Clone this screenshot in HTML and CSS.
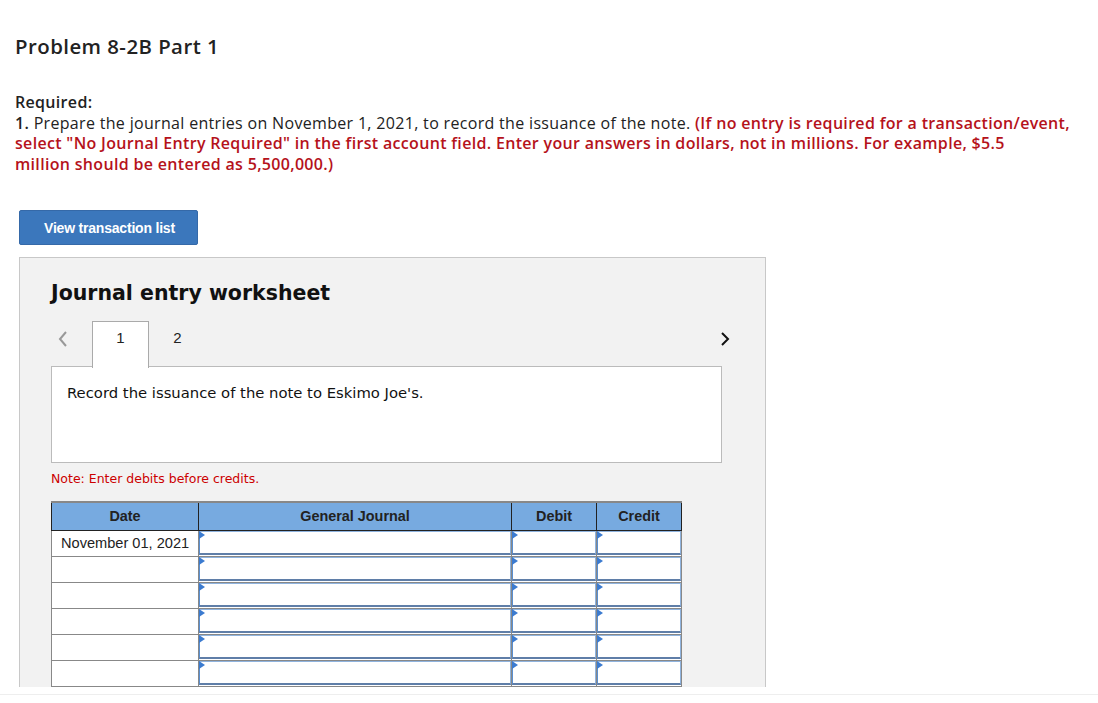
FILE: index.html
```html
<!doctype html>
<html>
<head>
<meta charset="UTF-8">
<title>Problem 8-2B Part 1</title>
<link rel="stylesheet" href="styles.css">
</head>
<body>
<div class="page">
	<h1 class="title">Problem 8-2B Part 1</h1>
	<div class="req">
		<p class="req-head">Required:</p>
		<p><b>1.</b> Prepare the journal entries on November 1, 2021, to record the issuance of the note. <span class="hint">(If no entry is required for a transaction/event, select "No Journal Entry Required" in the first account field. Enter your answers in dollars, not in millions. For example, $5.5<br>million should be entered as 5,500,000.)</span></p>
	</div>
	<button class="btn-list">View transaction list</button>
	<div class="sheet">
		<h2 class="sheet-title">Journal entry worksheet</h2>
		<div class="tabs">
			<span class="arrow prev">
				<svg width="10" height="16" viewBox="0 0 10 16"><path d="M8 1 L2 8 L8 15" fill="none" stroke="#999" stroke-width="2"/></svg>
			</span>
			<span class="tab on">1</span>
			<span class="tab">2</span>
			<span class="arrow next">
				<svg width="10" height="16" viewBox="0 0 10 16"><path d="M2 2 L8 8 L2 14" fill="none" stroke="#111" stroke-width="2"/></svg>
			</span>
		</div>
		<div class="record">Record the issuance of the note to Eskimo Joe's.</div>
		<p class="note">Note: Enter debits before credits.</p>
		<table class="journal">
			<tr>
				<th class="c-date">Date</th>
				<th class="c-acct">General Journal</th>
				<th class="c-amt">Debit</th>
				<th class="c-amt">Credit</th>
			</tr>
			<tr>
				<td class="date">November 01, 2021</td>
				<td><div class="inp"></div></td>
				<td><div class="inp"></div></td>
				<td><div class="inp"></div></td>
			</tr>
			<tr>
				<td class="date"></td>
				<td><div class="inp"></div></td>
				<td><div class="inp"></div></td>
				<td><div class="inp"></div></td>
			</tr>
			<tr>
				<td class="date"></td>
				<td><div class="inp"></div></td>
				<td><div class="inp"></div></td>
				<td><div class="inp"></div></td>
			</tr>
			<tr>
				<td class="date"></td>
				<td><div class="inp"></div></td>
				<td><div class="inp"></div></td>
				<td><div class="inp"></div></td>
			</tr>
			<tr>
				<td class="date"></td>
				<td><div class="inp"></div></td>
				<td><div class="inp"></div></td>
				<td><div class="inp"></div></td>
			</tr>
			<tr>
				<td class="date"></td>
				<td><div class="inp"></div></td>
				<td><div class="inp"></div></td>
				<td><div class="inp"></div></td>
			</tr>
		</table>
	</div>
</div>
<div class="foot"></div>
</body>
</html>
```

FILE: styles.css
```css
*{margin:0;padding:0;box-sizing:border-box;}
body{background:#fff;font-family:"Open Sans",Lato,sans-serif;color:#222;}
.page{height:687px;overflow:hidden;padding:0 0 0 15px;}
.title{font-size:20.4px;font-weight:600;color:#222;padding-top:33px;line-height:26px;letter-spacing:0.45px;}
.req{margin-top:33px;font-size:16px;line-height:20.5px;width:1075px;letter-spacing:0.32px;}
.req-head{font-weight:600;}
.req b{font-weight:600;}
.hint{color:#b5121b;font-weight:600;letter-spacing:0.32px;}
.btn-list{display:block;margin:36px 0 0 4px;width:179px;height:35px;background:#3b77bc;color:#fff;border:1px solid #3569a8;border-radius:2px;font-family:"Liberation Sans",Arial,sans-serif;font-size:14px;font-weight:bold;text-align:left;padding-left:24px;letter-spacing:-0.2px;}
.sheet{margin:12px 0 0 4px;width:747px;height:460px;background:#f2f2f2;border:1px solid #c8c8c8;padding:0 0 0 31px;font-family:"DejaVu Sans",Verdana,sans-serif;}
.sheet-title{font-size:20.5px;font-weight:bold;color:#111;margin-top:25px;line-height:20px;}
.tabs{display:flex;align-items:flex-start;margin-top:18px;height:46px;width:672px;position:relative;}
.arrow{display:flex;align-items:center;height:20px;margin-top:8px;}
.prev{margin:8px 24px 0 7px;}
.next{margin-left:auto;margin-right:-7px;}
.tab{font-family:"Liberation Sans",Arial,sans-serif;font-size:15px;width:57px;height:46px;padding-top:8px;text-align:center;color:#222;}
.tab.on{background:#fff;border:1px solid #aaa;border-bottom:none;margin-bottom:-1px;position:relative;z-index:2;height:47px;padding-top:7px;}
.record{width:671px;height:97px;background:#fff;border:1px solid #bbb;margin-top:-1px;padding:17px 0 0 15px;font-size:14.8px;color:#111;}
.note{color:#c00;font-size:12.5px;margin-top:9px;line-height:14px;}
.journal{border-collapse:collapse;margin-top:15px;border-top:2px solid #888;font-family:"Liberation Sans",Arial,sans-serif;}
.journal th{background:#77aae0;height:28px;font-size:14.4px;font-weight:bold;color:#222;border:1px solid #222;border-top:none;}
.c-date{width:147px;}
.c-acct{width:313px;}
.c-amt{width:85px;}
.journal td{border:1px solid #888;height:26px;padding:0;background:#fff;}
.journal td.date{font-size:14.6px;color:#222;padding:0 0 0 9px;}
.inp{position:relative;height:24px;margin:0;border:1px solid #8fb3de;border-left:1px solid #5a8fd0;border-bottom:2px solid #5f7ea8;background:#fff;}
.inp:before{content:"";position:absolute;left:-1px;top:-1px;border-left:6px solid #3b7bd0;border-top:4px solid transparent;border-bottom:4px solid transparent;}
.foot{height:1px;background:#eee;margin-top:7px;}
```
